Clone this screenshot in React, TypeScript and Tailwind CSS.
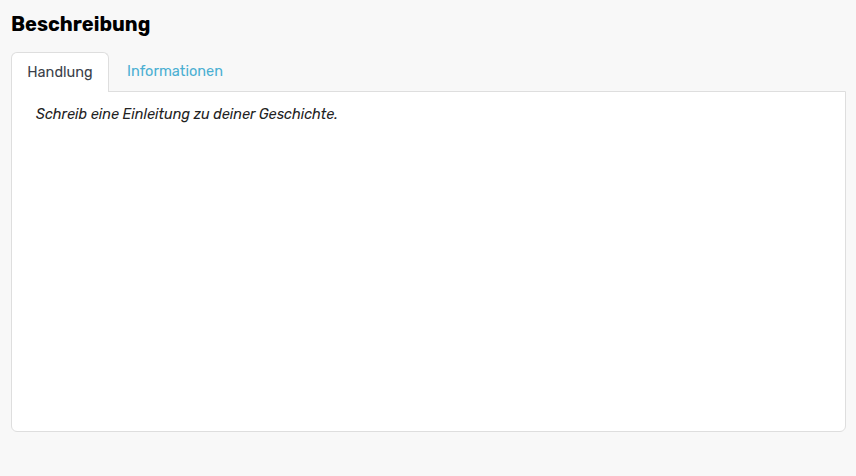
export default function App() {
  return (
    <div
      className="min-h-[476px] w-full bg-[#f8f8f8] px-[11px] pt-[12px]"
      style={{ fontFamily: "Rubik, Inter, 'Noto Sans', sans-serif" }}
    >
      <h2 className="text-[20px] font-bold leading-[24px] text-black">Beschreibung</h2>
      <div className="mt-[16px] w-[835px]">
        <div className="flex items-end">
          <button className="relative z-10 -mb-px h-[40px] w-[98px] rounded-t-[6px] border border-b-0 border-[#dedede] bg-white text-[14.5px] text-[#3b3f4a]">
            Handlung
          </button>
          <button className="h-[39px] px-[18px] text-[14.5px] text-[#4aafd2]">Informationen</button>
        </div>
        <div className="h-[341px] rounded-b-[6px] border border-[#dedede] bg-white px-[24px] pt-[12px]">
          <p className="text-[14.4px] italic text-[#222]">Schreib eine Einleitung zu deiner Geschichte.</p>
        </div>
      </div>
    </div>
  );
}
